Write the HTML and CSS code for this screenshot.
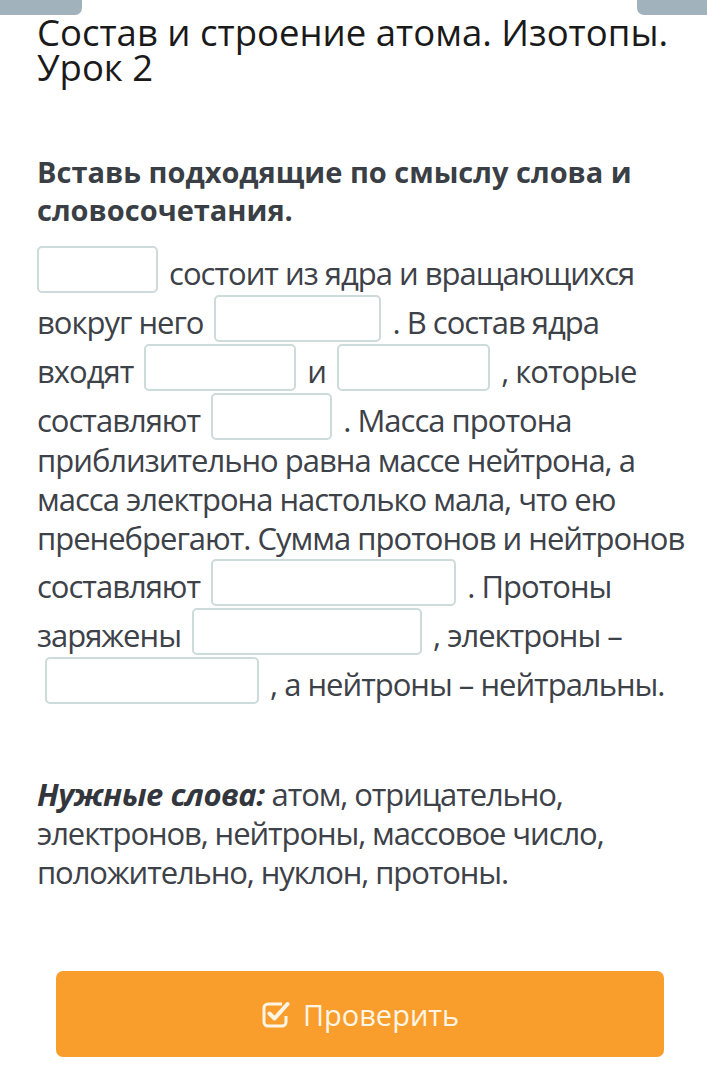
FILE: index.html
```html
<!DOCTYPE html>
<html>
<head>
	<title>Состав и строение атома. Изотопы. Урок 2</title>
	<link rel="stylesheet" href="styles.css">
</head>
<body>
	<div class="tabs">
		<span class="tab tab-left"></span>
		<span class="tab tab-right"></span>
	</div>

	<div class="page">
		<h1 class="title">Состав и строение атома. Изотопы. Урок 2</h1>

		<h2 class="task">Вставь подходящие по смыслу слова и словосочетания.</h2>

		<p class="gaps">
			<span class="blank w121 first"></span> состоит из ядра и вращающихся вокруг него
			<span class="blank w167"></span> . В состав ядра входят
			<span class="blank w152"></span> и
			<span class="blank w153"></span> , которые составляют
			<span class="blank w121"></span> . Масса протона приблизительно равна массе нейтрона, а масса электрона настолько мала, что ею пренебрегают. Сумма протонов и нейтронов составляют
			<span class="blank w245"></span> . Протоны заряжены
			<span class="blank w230"></span> , электроны –
			<span class="blank w214 shift"></span> , а нейтроны – нейтральны.
		</p>

		<p class="words"><b><i>Нужные слова:</i></b> атом, отрицательно, электронов, нейтроны, массовое число, положительно, нуклон, протоны.</p>

		<button class="check">
			<svg class="check-icon" width="30" height="30" viewBox="0 0 30 30">
				<path d="M21 5 H7 a4 4 0 0 0 -4 4 V23 a4 4 0 0 0 4 4 H21 a4 4 0 0 0 4 -4 V17" fill="none" stroke="currentColor" stroke-width="3"/>
				<path d="M8.5 14.5 L13.5 19.5 L26.5 5" fill="none" stroke="currentColor" stroke-width="4" stroke-linecap="round" stroke-linejoin="round"/>
			</svg>
			Проверить
		</button>
	</div>
</body>
</html>
```

FILE: styles.css
```css
body {
	margin: 0;
	padding: 0;
	background-color: #fff;
	font-family: "Open Sans", "Noto Sans", sans-serif;
	color: #3d4148;
}
.tabs {
	display: flex;
	justify-content: space-between;
	height: 15px;
}
.tab {
	display: block;
	height: 15px;
	background-color: #a2b2bd;
}
.tab-left {
	width: 82px;
	border-bottom-right-radius: 7px;
}
.tab-right {
	width: 70px;
	border-bottom-left-radius: 7px;
}
.page {
	padding: 0 16px 30px 37px;
}
.title {
	margin: 0;
	font-size: 36.5px;
	line-height: 35px;
	font-weight: normal;
	color: #1a1a1a;
}
.task {
	margin: 68px 0 0 0;
	font-size: 29px;
	line-height: 38px;
	font-weight: bold;
	color: #3a3f46;
}
.gaps {
	margin: 16px 0 0 0;
	font-size: 31px;
	line-height: 39px;
	letter-spacing: -1px;
}
.blank {
	display: inline-block;
	box-sizing: border-box;
	height: 47px;
	margin: 1px 4px;
	border: 2px solid #cddbda;
	border-radius: 5px;
	background-color: #fff;
	vertical-align: -9px;
}
.blank.first {
	margin-left: 0;
}
.blank.shift {
	margin-left: 8px;
}
.w121 { width: 121px; }
.w152 { width: 152px; }
.w153 { width: 153px; }
.w167 { width: 167px; }
.w214 { width: 214px; }
.w230 { width: 230px; }
.w245 { width: 245px; }
.words {
	margin: 70px 0 0 0;
	font-size: 31px;
	line-height: 39px;
	letter-spacing: -1.1px;
}
.words b {
	color: #33373d;
	letter-spacing: -0.5px;
}
.check {
	display: flex;
	align-items: center;
	justify-content: center;
	gap: 12px;
	width: 608px;
	height: 86px;
	margin: 79px 0 0 19px;
	border: none;
	border-radius: 7px;
	background-color: #f99e2c;
	color: #fff5e6;
	font-family: "Open Sans", "Noto Sans", sans-serif;
	font-size: 29px;
	cursor: pointer;
}
.check-icon {
	display: block;
}
```
